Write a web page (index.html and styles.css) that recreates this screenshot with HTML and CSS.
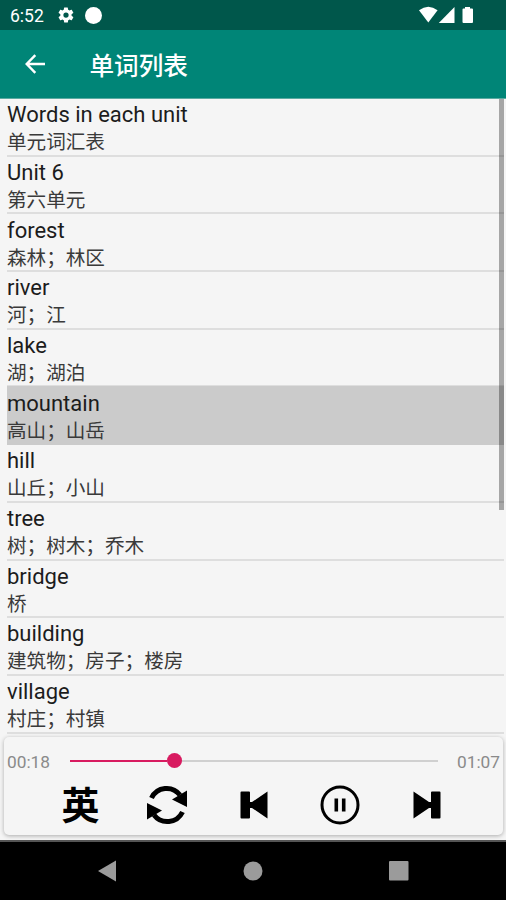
FILE: index.html
```html
<!DOCTYPE html>
<html lang="zh-CN">

<head>
    <meta charset="UTF-8">
    <meta name="viewport" content="width=device-width, initial-scale=1.0">
    <title>单词列表</title>
    <link rel="stylesheet" href="styles.css">
</head>

<body>
    <div class="phone">
        <div class="status">
            <span class="clock">6:52</span>
            <svg class="gear" width="18" height="18" viewBox="0 0 24 24">
                <path fill="#fff" fill-rule="evenodd" d="M19.4 13a7.500 7.500 0 0 0 0-2l2.200-1.700a.5.5 0 0 0 .1-.6l-2.100-3.600a.5.5 0 0 0-.6-.2l-2.500 1a7.500 7.500 0 0 0-1.700-1l-.4-2.600a.5.5 0 0 0-.5-.4h-4a.5.5 0 0 0-.5.4L9 4.900a7.500 7.500 0 0 0-1.700 1l-2.400-1a.5.5 0 0 0-.6.2L2.200 8.700a.5.5 0 0 0 .1.600L4.500 11a7.500 7.500 0 0 0 0 2l-2.200 1.700a.5.5 0 0 0-.1.600l2.100 3.600c.1.2.4.3.6.2l2.500-1a7.500 7.500 0 0 0 1.700 1l.4 2.600c0 .2.200.4.500.4h4c.3 0 .5-.2.500-.4l.4-2.600a7.500 7.500 0 0 0 1.700-1l2.400 1c.2.100.5 0 .6-.2l2.100-3.600a.5.5 0 0 0-.1-.6zM12 15.500a3.500 3.500 0 1 1 0-7 3.500 3.500 0 0 1 0 7z" />
            </svg>
            <span class="dot"></span>
            <svg class="signals" width="56" height="18" viewBox="0 0 56 18">
                <path fill="#fff" d="M0 4.200Q9.300-2.800 18.600 4.200L9.300 16.500z" />
                <path fill="#fff" d="M35.500 1v16H19.800z" />
                <path fill="#fff" d="M46 1h5v1.500h2q1 0 1 1V16q0 1-1 1h-8.500q-1 0-1-1V3.500q0-1 1-1H46z" />
            </svg>
        </div>

        <div class="appbar">
            <svg class="back" width="20" height="20" viewBox="0 0 20 20">
                <path fill="none" stroke="#fff" stroke-width="2.400" d="M20 10H2M10.300 1.200L1.700 10l8.600 8.800" />
            </svg>
            <h1>单词列表</h1>
        </div>

        <div class="content">
            <ul class="words">
                <li><p class="en">Words in each unit</p><p class="zh">单元词汇表</p></li>
                <li><p class="en">Unit 6</p><p class="zh">第六单元</p></li>
                <li><p class="en">forest</p><p class="zh">森林；林区</p></li>
                <li><p class="en">river</p><p class="zh">河；江</p></li>
                <li><p class="en">lake</p><p class="zh">湖；湖泊</p></li>
                <li class="active"><p class="en">mountain</p><p class="zh">高山；山岳</p></li>
                <li><p class="en">hill</p><p class="zh">山丘；小山</p></li>
                <li><p class="en">tree</p><p class="zh">树；树木；乔木</p></li>
                <li><p class="en">bridge</p><p class="zh">桥</p></li>
                <li><p class="en">building</p><p class="zh">建筑物；房子；楼房</p></li>
                <li><p class="en">village</p><p class="zh">村庄；村镇</p></li>
            </ul>
            <div class="scrollbar"></div>
        </div>

        <div class="player">
            <div class="progress">
                <span class="time">00:18</span>
                <div class="track">
                    <div class="played"></div>
                    <div class="thumb"></div>
                    <div class="rest"></div>
                </div>
                <span class="time">01:07</span>
            </div>
            <div class="controls">
                <button class="lang">英</button>
                <button>
                    <svg width="42" height="40" viewBox="0 0 42 40">
                        <g fill="none" stroke="#000" stroke-width="5">
                            <path d="M5.500 13A16.800 16.800 0 0 1 34 10" />
                            <path d="M36.500 27A16.800 16.800 0 0 1 8 30" />
                        </g>
                        <path d="M41 5.500V22L26 14.500l5-3z" />
                        <path d="M1 34.500V18L16 25.500l-5 3z" />
                    </svg>
                </button>
                <button>
                    <svg width="28" height="28" viewBox="0 0 28 28">
                        <path d="M1.500.5H9q1 0 1 1v9.500h2L27.500.5v27L12 17h-2v9.500q0 1-1 1H1.500q-1 0-1-1v-25q0-1 1-1z" />
                    </svg>
                </button>
                <button>
                    <svg width="40" height="40" viewBox="0 0 40 40">
                        <circle cx="20" cy="20" r="18" fill="none" stroke="#000" stroke-width="3" />
                        <path fill="none" stroke="#000" stroke-width="3.600" d="M16.300 13.500v13M23.700 13.500v13" />
                    </svg>
                </button>
                <button>
                    <svg width="28" height="28" viewBox="0 0 28 28">
                        <path d="M26.500.5H19q-1 0-1 1v9.500h-2L.5.5v27L16 17h2v9.500q0 1 1 1h7.500q1 0 1-1v-25q0-1-1-1z" />
                    </svg>
                </button>
            </div>
        </div>

        <div class="nav">
            <svg width="18" height="22" viewBox="0 0 18 22"><path fill="#9b9b9b" d="M18 .5v21L0 11z" /></svg>
            <svg width="20" height="20" viewBox="0 0 20 20"><circle cx="10" cy="10" r="9.500" fill="#9b9b9b" /></svg>
            <svg width="20" height="20" viewBox="0 0 20 20"><rect width="19.500" height="19.500" rx="1" fill="#9b9b9b" /></svg>
        </div>
    </div>
</body>

</html>
```
FILE: styles.css
```css
* {
    box-sizing: border-box;
}

body {
    margin: 0;
    font-family: Roboto, "Noto Sans CJK SC", sans-serif;
}

p,
h1,
ul {
    margin: 0;
    padding: 0;
}

svg {
    display: block;
}

.phone {
    display: flex;
    flex-direction: column;
    width: 506px;
    height: 900px;
    overflow: hidden;
    background: #f5f5f5;
}

.status {
    display: flex;
    align-items: center;
    flex: none;
    height: 30px;
    padding: 0 31px 0 10px;
    background: #00574b;
    color: #fff;
}

.clock {
    width: 47px;
    padding-top: 2px;
    font-size: 17.5px;
    font-weight: 400;
}

.dot {
    width: 17px;
    height: 17px;
    margin-left: 10px;
    border-radius: 50%;
    background: #fff;
}

.signals {
    margin-left: auto;
}

.appbar {
    display: flex;
    align-items: center;
    flex: none;
    height: 68px;
    padding-left: 25px;
    background: #008577;
    color: #fff;
}

.appbar h1 {
    margin-left: 44.5px;
    padding-top: 5px;
    font-size: 24.6px;
    font-weight: 500;
    line-height: 34px;
}

.content {
    position: relative;
    flex: none;
    height: 638px;
    border-top: 1px solid #5aaaa1;
    overflow: hidden;
}

.words {
    list-style: none;
    padding: 0 2px 0 7px;
}

.words li {
    height: 57.7px;
    padding-top: 2.2px;
    border-bottom: 2px solid #dedede;
    color: #1c1c1c;
}

.words .active {
    margin-top: -1px;
    height: 58.7px;
    padding-top: 3.2px;
    border-color: #cbcbcb;
    background: #cbcbcb;
}

.en {
    font-size: 22px;
    line-height: 28px;
}

.zh {
    font-size: 19.6px;
    line-height: 27px;
    color: #3a3a3a;
}

.scrollbar {
    position: absolute;
    top: 0;
    right: 2px;
    width: 5px;
    height: 411px;
    background: rgba(0, 0, 0, 0.32);
}

.player {
    flex: none;
    height: 98px;
    margin: 1px 3px 5px 4px;
    padding: 0 3px;
    border-radius: 5px;
    background: #f5f5f5;
    box-shadow: 0 1px 4px rgba(0, 0, 0, 0.3);
}

.progress {
    display: flex;
    align-items: center;
    justify-content: space-between;
    height: 47px;
}

.time {
    padding-top: 3px;
    font-size: 17.3px;
    color: #8a8a8a;
}

.track {
    display: flex;
    align-items: center;
    width: 368px;
}

.played {
    width: 97px;
    height: 2px;
    background: #d81b60;
}

.thumb {
    width: 15px;
    height: 15px;
    border-radius: 50%;
    background: #d81b60;
}

.rest {
    flex: 1;
    height: 2px;
    background: #d0d0d0;
}

.controls {
    display: grid;
    grid-template-columns: repeat(5, 86.5px);
    justify-content: center;
    height: 42px;
}

.controls button {
    display: flex;
    align-items: center;
    justify-content: center;
    padding: 0;
    border: 0;
    background: none;
    color: #000;
}

.controls .lang {
    padding-bottom: 4px;
    font-family: "Noto Sans CJK SC", sans-serif;
    font-size: 38px;
    font-weight: 700;
    line-height: 36px;
}

.nav {
    display: grid;
    grid-template-columns: repeat(3, 146px);
    align-items: center;
    justify-content: center;
    justify-items: center;
    flex: 1;
    border-top: 2px solid #555;
    background: #000;
}
```
